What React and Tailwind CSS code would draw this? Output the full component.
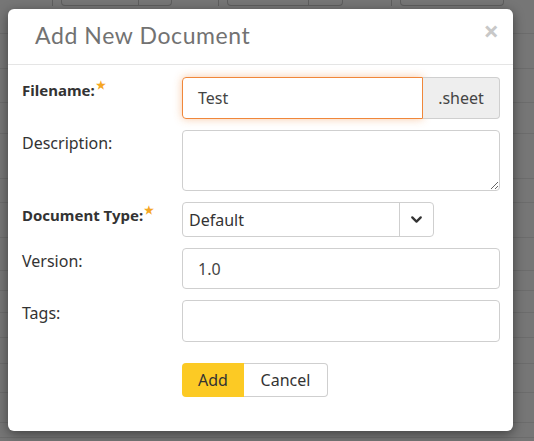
import React from "react";
import { ChevronDown } from "lucide-react";

const bgLines = [33, 68, 102, 133, 178, 202, 237, 270, 290, 312, 337, 363, 392, 422, 437];

const Label = ({ children, required }) => (
  <div
    className={`pt-[3px] leading-[20px] text-[#333] ${
      required ? "text-[15px] font-bold" : "text-[16px]"
    }`}
  >
    {children}
    {required && <span className="relative -top-[7px] ml-[1px] text-[11px] text-[#f5a623]">★</span>}
  </div>
);

export default function App() {
  return (
    <div
      className="relative w-[534px] h-[441px] overflow-hidden bg-[#767676]"
      style={{ fontFamily: '"Noto Sans", "Open Sans", sans-serif' }}
    >
      {/* page behind the overlay */}
      <div className="absolute inset-0">
        {bgLines.map((y) => (
          <div key={y} className="absolute left-0 right-0 h-px bg-[#6c6c6c]" style={{ top: y }} />
        ))}
        <div className="absolute left-0 top-0 flex h-[6px] w-full">
          <div className="ml-[52px] h-full w-px bg-[#5e5e5e]" />
          <div className="ml-[8px] flex h-full w-[111px] rounded-b-[4px] border border-t-0 border-[#5e5e5e]">
            <div className="ml-[76px] h-full w-px bg-[#5e5e5e]" />
          </div>
          <div className="ml-[46px] h-full w-px bg-[#5e5e5e]" />
          <div className="ml-[8px] flex h-full w-[116px] rounded-b-[4px] border border-t-0 border-[#5e5e5e]">
            <div className="ml-[80px] h-full w-px bg-[#5e5e5e]" />
          </div>
          <div className="ml-[48px] h-full w-px bg-[#5e5e5e]" />
          <div className="ml-[8px] flex h-full w-[104px] rounded-b-[4px] border border-t-0 border-[#5e5e5e]" />
        </div>
      </div>

      {/* modal */}
      <div className="absolute left-[8px] top-[9px] w-[505px] h-[422px] rounded-[6px] bg-white shadow-[0_3px_12px_rgba(0,0,0,0.45)]">
        <div className="flex h-[56px] items-start justify-between border-b border-[#e5e5e5] pl-[27px] pr-[14px]">
          <h2
            className="mt-[10px] text-[23px] leading-[32px] tracking-[0.6px] text-[#727272]"
            style={{ fontFamily: '"Lato", "Noto Sans", sans-serif' }}
          >
            Add New Document
          </h2>
          <span className="mt-[7px] text-[27px] font-bold leading-[30px] text-[#c8c8c8]">×</span>
        </div>

        <div className="grid grid-cols-[160px_318px] gap-y-[11px] pl-[14px] pt-[12px]">
          <Label required>Filename:</Label>
          <div className="flex h-[42px]">
            <div className="flex flex-1 items-center rounded-l-[4px] border border-[#f0873a] pl-[15px] text-[16px] text-[#444] shadow-[0_0_8px_rgba(240,135,58,0.45)]">
              Test
            </div>
            <div className="flex w-[77px] items-center justify-center rounded-r-[4px] border border-l-0 border-[#cfcfcf] bg-[#eeeeee] text-[16px] text-[#444]">
              .sheet
            </div>
          </div>

          <Label>Description:</Label>
          <textarea className="block h-[61px] w-full rounded-[4px] border border-[#cfcfcf] outline-none" />

          <Label required>Document Type:</Label>
          <div className="flex h-[35px] w-[252px] rounded-[4px] border border-[#cfcfcf]">
            <div className="flex flex-1 items-center pl-[6px] text-[16px] text-[#333]">Default</div>
            <div className="flex w-[34px] items-center justify-center border-l border-[#cfcfcf]">
              <ChevronDown size={17} strokeWidth={3.2} color="#333" />
            </div>
          </div>

          <Label>Version:</Label>
          <div className="flex h-[41px] items-center rounded-[4px] border border-[#cfcfcf] pl-[15px] text-[16px] text-[#444]">
            1.0
          </div>

          <Label>Tags:</Label>
          <div className="h-[42px] rounded-[4px] border border-[#cfcfcf]" />

          <div />
          <div className="mt-[10px] flex h-[34px]">
            <button className="w-[62px] rounded-l-[4px] bg-[#fcca24] text-[16px] text-[#333]">Add</button>
            <button className="w-[84px] rounded-r-[4px] border border-l-0 border-[#cfcfcf] bg-white text-[16px] text-[#333]">
              Cancel
            </button>
          </div>
        </div>
      </div>
    </div>
  );
}
